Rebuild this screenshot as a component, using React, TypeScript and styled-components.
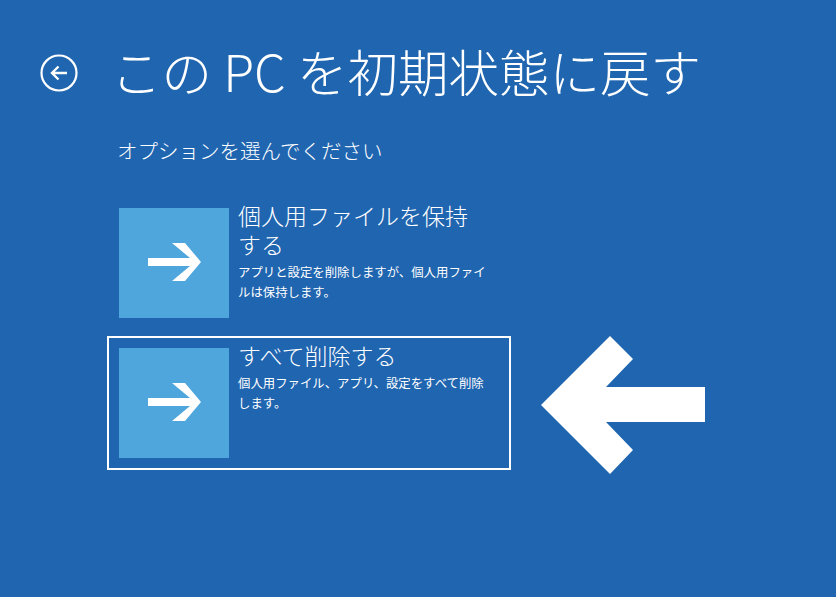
import React from "react";
import styled, { createGlobalStyle } from "styled-components";

const Global = createGlobalStyle`
  html, body { margin: 0; padding: 0; }
  body {
    background: #1f65b0;
    width: 836px;
    height: 597px;
    overflow: hidden;
    font-family: "Noto Sans CJK JP", "Noto Sans", sans-serif;
    color: #ffffff;
    text-spacing-trim: space-all;
  }
`;

const Page = styled.div`
  position: relative;
  width: 836px;
  height: 597px;
  box-sizing: border-box;
  padding: 40px 0 0 40px;
`;

const Header = styled.div`
  display: flex;
  align-items: center;
  height: 60px;
  gap: 33px;
`;

const BackButton = styled.button`
  width: 38px;
  height: 38px;
  padding: 0;
  border: none;
  background: transparent;
  display: flex;
  align-items: center;
  justify-content: center;
  margin-top: 6px;
`;

const Title = styled.h1`
  margin: 0;
  font-size: 50.5px;
  line-height: 60px;
  font-weight: 200;
  letter-spacing: 0;
  white-space: nowrap;
`;

const Subtitle = styled.div`
  margin: 36px 0 0 77px;
  font-size: 20.5px;
  line-height: 28px;
  font-weight: 200;
`;

const Options = styled.div`
  display: flex;
  flex-direction: column;
  gap: 6px;
  margin: 32px 0 0 67px;
`;

const Option = styled.div<{ $focused?: boolean }>`
  display: flex;
  align-items: flex-start;
  gap: 9px;
  width: 404px;
  box-sizing: border-box;
  padding: 10px;
  border: 2px solid ${(p) => (p.$focused ? "#ffffff" : "transparent")};
`;

const Tile = styled.div`
  flex: none;
  width: 110px;
  height: 110px;
  background: #4fa6dc;
  display: flex;
`;

const OptionText = styled.div`
  margin-top: -7px;
  width: 251px;
`;

const OptionTitle = styled.div`
  font-size: 23px;
  line-height: 29px;
  font-weight: 200;
`;

const OptionDesc = styled.div`
  margin-top: 3px;
  font-size: 12.4px;
  line-height: 20px;
  font-weight: 400;
`;

const Pointer = styled.svg`
  position: absolute;
  left: 541px;
  top: 336px;
`;

const TileArrow = () => (
  <svg width="110" height="110" viewBox="0 0 110 110">
    <path
      d="M29 50 H71 L53 35 H66 L82 54 L66 73 H53 L71 58 H29 Z"
      fill="#ffffff"
    />
  </svg>
);

const BackIcon = () => (
  <svg width="38" height="38" viewBox="0 0 38 38">
    <circle cx="19" cy="19" r="17.5" fill="none" stroke="#ffffff" strokeWidth="2.2" />
    <path
      d="M27 19 H12 M18.5 12.5 L12 19 L18.5 25.5"
      fill="none"
      stroke="#ffffff"
      strokeWidth="2.4"
    />
  </svg>
);

export default function App() {
  return (
    <>
      <Global />
      <Page>
        <Header>
          <BackButton aria-label="戻る">
            <BackIcon />
          </BackButton>
          <Title>この PC を初期状態に戻す</Title>
        </Header>
        <Subtitle>オプションを選んでください</Subtitle>
        <Options>
          <Option>
            <Tile>
              <TileArrow />
            </Tile>
            <OptionText>
              <OptionTitle>個人用ファイルを保持する</OptionTitle>
              <OptionDesc>アプリと設定を削除しますが、個人用ファイルは保持します。</OptionDesc>
            </OptionText>
          </Option>
          <Option $focused>
            <Tile>
              <TileArrow />
            </Tile>
            <OptionText>
              <OptionTitle>すべて削除する</OptionTitle>
              <OptionDesc>個人用ファイル、アプリ、設定をすべて削除します。</OptionDesc>
            </OptionText>
          </Option>
        </Options>
        <Pointer width="165" height="140" viewBox="0 0 165 140">
          <polygon
            points="0,69 69,0 92,23 65,51 164,51 164,86 65,86 92,114 69,138"
            fill="#ffffff"
          />
        </Pointer>
      </Page>
    </>
  );
}
